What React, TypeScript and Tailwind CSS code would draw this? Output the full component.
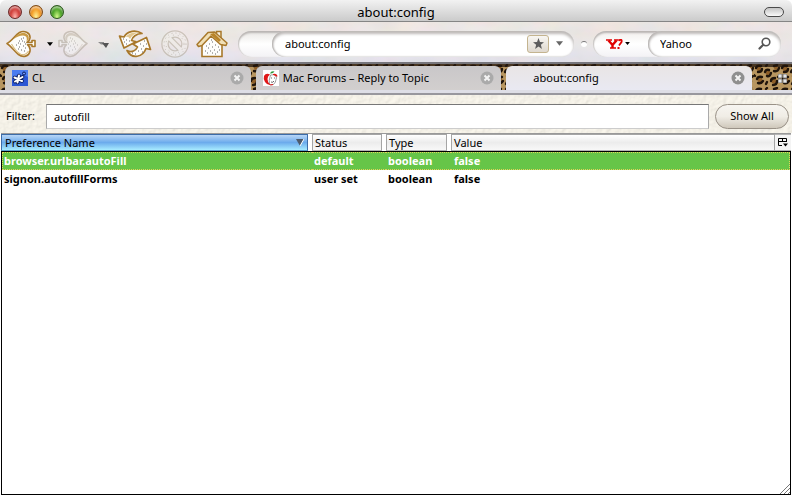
import { useState } from 'react';
import type { ReactNode } from 'react';

interface Preference {
    name: string;
    status: string;
    type: string;
    value: string;
}

const preferences: Preference[] = [
    { name: 'browser.urlbar.autoFill', status: 'default', type: 'boolean', value: 'false' },
    { name: 'signon.autofillForms', status: 'user set', type: 'boolean', value: 'false' },
];

const GOLD = '#a8782a';

/* ---------- Textures ---------- */

function LeopardTexture() {
    return (
        <svg className="absolute inset-0 h-full w-full" aria-hidden="true">
            <defs>
                <pattern id="leopard" width="26" height="23" patternUnits="userSpaceOnUse">
                    <rect width="26" height="23" fill="#b89660" />
                    <g fill="#8f5f28">
                        <circle cx="5" cy="5" r="2.4" />
                        <circle cx="14" cy="9" r="2.4" />
                        <circle cx="22" cy="4" r="2" />
                        <circle cx="6" cy="16" r="2.4" />
                        <circle cx="20" cy="17" r="2.6" />
                    </g>
                    <g fill="none" stroke="#1f140b" strokeWidth="2.4" strokeLinecap="round">
                        <path d="M2 4 Q3 1 7 2 M8 5 Q8 8 4 8" />
                        <path d="M11 8 Q12 5 15 6 M17 9 Q16 13 13 12" />
                        <path d="M20 2 L23 1 M25 4 Q24 8 20 7" />
                        <path d="M3 15 Q4 12 8 13 M9 17 Q7 20 4 19" />
                        <path d="M17 17 Q17 14 21 14 M23 17 Q23 21 19 21" />
                        <path d="M0 11 L1 12 M13 18 L12 20 M13 1 L12 2 M25 12 L24 13" />
                    </g>
                </pattern>
            </defs>
            <rect width="100%" height="100%" fill="url(#leopard)" />
            <rect width="100%" height="3" fill="#23150d" opacity="0.75" />
        </svg>
    );
}

function PaperTexture() {
    return (
        <svg className="absolute inset-0 h-full w-full opacity-60" aria-hidden="true">
            <filter id="paper" x="0" y="0" width="100%" height="100%">
                <feTurbulence type="fractalNoise" baseFrequency="0.2" numOctaves="3" seed="4" />
                <feDiffuseLighting lightingColor="#f8f4ea" surfaceScale="0.7" diffuseConstant="1.12">
                    <feDistantLight azimuth="230" elevation="60" />
                </feDiffuseLighting>
            </filter>
            <rect width="100%" height="100%" filter="url(#paper)" />
        </svg>
    );
}

function StoneTexture() {
    return (
        <svg className="absolute inset-0 h-full w-full opacity-30" aria-hidden="true">
            <filter id="stone" x="0" y="0" width="100%" height="100%">
                <feTurbulence type="fractalNoise" baseFrequency="0.03 0.05" numOctaves="4" seed="9" />
                <feColorMatrix values="0.5 0 0 0 0.6  0 0.3 0 0 0.67  0 0 0.5 0 0.58  0 0 0 0 1" />
            </filter>
            <rect width="100%" height="100%" filter="url(#stone)" />
        </svg>
    );
}

/* ---------- Toolbar icons ---------- */

function SpadeIcon() {
    return (
        <svg viewBox="0 0 30 28" className="h-7 w-[30px]" aria-hidden="true">
            <path
                d="M1 13.500 C6 11 9 5 13.500 2.500 C18 0 24.500 2.500 24 8 C23.800 10.200 22.500 11.600 21 12.500 H26 V10.500 H29 V16.500 H26 V14.700 H21.500 C23 16 24.500 18 24 21 C23 26.500 17 28 12.500 24.500 C8 21 5 16 1 13.500Z"
                fill="#fdfdfb"
                stroke={GOLD}
                strokeWidth="1.600"
                strokeLinejoin="round"
            />
            <path d="M8 9 Q12 2.500 18 2.700 Q23.500 4 22.800 9.500 L20.500 11.500 Q22 5.500 17 5.500 Q12 5.500 8 9Z" fill="#c99b45" />
            <path d="M5.500 14 Q10 22 15 24.500 Q20 25.500 22.500 21" fill="none" stroke="#dcc084" strokeWidth="1.200" />
            <path
                d="M15 9h1M17 8h1M13 11h1M16 11h1M12 13h1M18 12h1M10 15h1M14 14h1M13 17h1M17 16h1M19 18h1M15 20h1M18 21h1M19 14h1M12 19h1"
                stroke="#666"
                strokeWidth="1"
            />
        </svg>
    );
}

function ReloadIcon() {
    return (
        <svg viewBox="0 0 34 30" className="h-[30px] w-[34px]" aria-hidden="true">
            <g fill="#fdfdfb" stroke={GOLD} strokeWidth="1.700" strokeLinejoin="round">
                <path d="M24 4.500 C18 .5 9.500 1.500 6 8 L1.500 7 L6 19 L18 12.800 L13.500 11.500 C14 8 18.500 4.500 24 4.500Z" />
                <path d="M9 21.500 C14 24 18 21.500 19.500 18 L15 15 L28.500 8.500 L32.500 20.500 L28 19.500 C25 28 14 31 9 21.500Z" />
            </g>
            <path d="M7.500 8 Q12 2.500 20 3.700 Q14 5.500 12 10 Q10.500 7 7.500 8Z" fill="#d8b46c" opacity=".75" />
            <path d="M5 10h1M8 11h1M6 13h1M11 12h1M8 15h1M26 12h1M22 15h1M28 15h1M25 17h1M23 20h1M20 22h1M24 23h1M17 25h1M14 24h1" stroke="#666" />
        </svg>
    );
}

function StopIcon() {
    return (
        <svg viewBox="0 0 30 30" className="h-[30px] w-[30px] opacity-50" aria-hidden="true">
            <circle cx="15" cy="15" r="10" fill="none" stroke="#aaa08e" strokeWidth="7.500" />
            <circle cx="15" cy="15" r="10" fill="none" stroke="#f1eee9" strokeWidth="5" />
            <path d="M10.500 10.500 L19.500 19.500" stroke="#aaa08e" strokeWidth="6" />
            <path d="M9 9 L21 21" stroke="#f1eee9" strokeWidth="3.500" />
            <circle cx="15" cy="15" r="11" fill="none" stroke="#a59d8d" strokeWidth="1" strokeDasharray="1 3" />
            <circle cx="15" cy="15" r="9" fill="none" stroke="#a59d8d" strokeWidth="1" strokeDasharray="1 4" />
        </svg>
    );
}

function HomeIcon() {
    return (
        <svg viewBox="0 0 32 28" className="h-7 w-8" aria-hidden="true">
            <path d="M20.500 6 V1.500 H25 V10Z" fill="#f7f0df" stroke={GOLD} strokeWidth="1.500" />
            <path d="M6 13 L16 4 L26 13 V26.500 H6Z" fill="#fdfdfb" stroke={GOLD} strokeWidth="1.600" />
            <path
                d="M1 14.500 L12 2.500 L18.500 2 L31 13 L30 15.500 L24.500 14.500 L15 6 L6 15.500 L2.500 16.500Z"
                fill="#f0dfb6"
                stroke={GOLD}
                strokeWidth="1.500"
                strokeLinejoin="round"
            />
            <path d="M14 4 L18 3 L25 10 L23 12Z" fill="#b98428" />
            <path d="M10 16h1M13 14h1M16 12h1M19 15h1M22 17h1M12 18h1M16 17h1M9 21h1M14 21h1M18 20h1M21 22h1M11 23h1M16 23h1M19 24h1M23 20h1M15 10h1" stroke="#666" />
        </svg>
    );
}

function DownArrow({ className }: { className: string }) {
    return (
        <svg viewBox="0 0 8 5" className={className} aria-hidden="true">
            <path d="M0 0H8L4 5Z" fill="currentColor" />
        </svg>
    );
}

/* ---------- Favicons and small icons ---------- */

function PawIcon() {
    return (
        <svg viewBox="0 0 16 16" className="size-4 shrink-0" aria-hidden="true">
            <rect width="16" height="16" fill="#2b56d4" />
            <path d="M0 0H16V7Q8 2 0 8Z" fill="#4a7cf0" />
            <path d="M7 5.500L5.500 12.500M2.500 7.500L10 11M10.500 7L3 11.500" stroke="#0a1c5c" strokeWidth="3.600" strokeLinecap="round" />
            <path d="M7 5.500L5.500 12.500M2.500 7.500L10 11M10.500 7L3 11.500" stroke="#fff" strokeWidth="2" strokeLinecap="round" />
            <circle cx="12" cy="3.500" r="1.500" fill="#6f93f5" stroke="#0a1c5c" />
        </svg>
    );
}

function AppleFaceIcon() {
    return (
        <svg viewBox="0 0 16 16" className="size-4 shrink-0" aria-hidden="true">
            <rect width="16" height="16" fill="#fff" />
            <path d="M7 4.500 Q3 2.500 1 6 Q0 9 2 12 Q4 15 7 15 Q4.500 12 4.500 9 Q4.500 6 7 4.500Z" fill="#e01818" />
            <path d="M7.500 5 Q11 4 13 6 Q14 8 13 9.500 Q13 12 10.500 14.500 Q8 15.500 6.500 14 Q5.500 11 7.500 5Z" fill="#fff" stroke="#777" strokeWidth=".7" />
            <path d="M10 4 Q14 3 14.500 6.500 L13 6.500 Q12 4.800 10 5Z" fill="#e01818" />
            <path d="M7 3.500 Q8 .5 11.500 1.500 Q10 4 7 3.500Z" fill="#2f9a3c" />
            <path d="M8 8h1M11 8h1M8 12q2 1 3-1" stroke="#444" strokeWidth=".8" fill="none" />
            <path d="M5 13 Q7 16 10 14.500" stroke="#e01818" fill="none" />
        </svg>
    );
}

function CloseIcon() {
    return (
        <svg viewBox="0 0 14 14" className="size-[14px]" aria-hidden="true">
            <circle cx="7" cy="7" r="6.500" fill="currentColor" />
            <path d="M4.500 4.500L9.500 9.500M9.500 4.500L4.500 9.500" stroke="#f4f4f4" strokeWidth="2" />
        </svg>
    );
}

function YahooIcon() {
    return (
        <svg viewBox="0 0 17 10" className="h-[10px] w-[17px]" aria-hidden="true">
            <path d="M0 1H6M8 1H12.500M4 9H10" stroke="#e00000" strokeWidth="1.600" fill="none" />
            <path d="M2.500 1.500L6.500 6M10.500 1.500L6.500 6V9" stroke="#e00000" strokeWidth="2.400" fill="none" />
            <path d="M12.500 1.500Q16.500 -.5 15.500 3L13 6.500" stroke="#e00000" strokeWidth="1.800" fill="none" />
            <rect x="11.500" y="8" width="2" height="2" fill="#e00000" />
        </svg>
    );
}

function MagnifierIcon() {
    return (
        <svg viewBox="0 0 13 13" className="h-[13px] w-[13px]" aria-hidden="true">
            <circle cx="8" cy="5" r="3.800" fill="none" stroke="#555" strokeWidth="1.600" />
            <path d="M5.300 7.700L1.500 11.500" stroke="#555" strokeWidth="2.200" strokeLinecap="round" />
        </svg>
    );
}

/* ---------- Window parts ---------- */

function TitleBar() {
    return (
        <header className="relative flex h-[22px] items-center justify-between rounded-t-md border-b border-[#858585] bg-linear-to-b from-[#f2f2f2] to-[#cbcbcb] px-2 pt-[2px]">
            <div className="flex gap-[7px]">
                <button aria-label="Close window" className="size-[14px] rounded-full border border-[#6b2a28] bg-radial-[at_50%_90%] from-[#ffb6ae] via-[#d2413c] to-[#962422] shadow-[inset_0_2px_2px_#ffffff88]" />
                <button aria-label="Minimize window" className="size-[14px] rounded-full border border-[#7c4a17] bg-radial-[at_50%_90%] from-[#fff39a] via-[#f5a02a] to-[#b85c0e] shadow-[inset_0_2px_2px_#ffffff88]" />
                <button aria-label="Zoom window" className="size-[14px] rounded-full border border-[#2c571c] bg-radial-[at_50%_90%] from-[#d4fb8c] via-[#52a82a] to-[#256e15] shadow-[inset_0_2px_2px_#ffffff88]" />
            </div>
            <h1 className="pointer-events-none absolute inset-x-0 text-center text-[13px] leading-5">about:config</h1>
            <button aria-label="Toggle toolbar" className="h-[10px] w-5 rounded-full border border-[#4a4a4a] bg-linear-to-b from-[#c4c4c4] to-[#fafafa]" />
        </header>
    );
}

function Toolbar() {
    return (
        <nav className="relative h-[42px] border-b-2 border-[#77767c] bg-linear-to-b from-[#eee5df] via-[#ebe6e3] to-[#dddde8] pl-[6px] pr-[11px] pt-[3px]">
            <StoneTexture />
            <div className="relative flex h-full items-center">
                <button aria-label="Back"><SpadeIcon /></button>
                <button aria-label="Back history" className="flex w-[22px] justify-center pl-[6px]">
                    <DownArrow className="h-1 w-[6px]" />
                </button>
                <button aria-label="Forward" className="-scale-x-100 opacity-35 grayscale-75"><SpadeIcon /></button>
                <button aria-label="Forward history" className="flex w-[30px] justify-center pt-[2px]">
                    <svg viewBox="0 0 11 6" className="h-[6px] w-[11px]" aria-hidden="true">
                        <path d="M0 0H6V2.500H3Z" fill="#8b8b8b" />
                        <path d="M4 1H11L8 6Z" fill="#555" />
                    </svg>
                </button>
                <button aria-label="Reload" className="mr-2"><ReloadIcon /></button>
                <button aria-label="Stop" className="mr-[6px]"><StopIcon /></button>
                <button aria-label="Home" className="mr-[10px]"><HomeIcon /></button>

                {/* Location bar */}
                <div className="flex h-[26px] flex-1 rounded-full bg-linear-to-b from-[#e9e7e4] via-white to-[#f3f2f5] pl-[34px] shadow-[inset_0_2px_2px_#b9b5b3,inset_1px_0_1px_#d6d3d1]">
                    <div className="flex flex-1 items-center rounded-full bg-white pl-[13px] pr-[11px] shadow-[inset_0_3px_3px_#bdb9b7,inset_1px_0_2px_#a5a2a0]">
                        <input aria-label="Location" defaultValue="about:config" className="w-0 flex-1 bg-transparent text-[11px] leading-4 outline-none" />
                        <button aria-label="Bookmark this page" className="mr-[7px] flex h-[18px] w-[22px] items-center justify-center rounded-[3px] border border-[#c4b48f] bg-linear-to-b from-[#f8f6f2] to-[#dfd9cf]">
                            <svg viewBox="0 0 12 12" className="size-[11px]" aria-hidden="true">
                                <path d="M6 0L7.600 4.300L12 4.500L8.600 7.300L9.700 12L6 9.300L2.300 12L3.400 7.300L0 4.500L4.400 4.300Z" fill="#5c5c5c" />
                            </svg>
                        </button>
                        <button aria-label="Show history" className="text-[#666]">
                            <DownArrow className="h-[5px] w-[7px]" />
                        </button>
                    </div>
                </div>

                <div className="flex w-[19px] justify-center">
                    <span className="size-[6px] rounded-full border-t border-[#777] bg-white" />
                </div>

                {/* Search bar */}
                <div className="flex h-[26px] w-[188px] rounded-full bg-linear-to-b from-[#f1eeec] via-white to-[#f3f2f5] shadow-[inset_0_2px_2px_#b9b5b3,inset_1px_0_1px_#d6d3d1]">
                    <button aria-label="Search engine" className="flex w-[55px] items-center gap-[2px] pl-[13px]">
                        <YahooIcon />
                        <DownArrow className="h-[3px] w-[5px]" />
                    </button>
                    <div className="flex flex-1 items-center rounded-full bg-white pl-3 pr-[10px] shadow-[inset_0_3px_3px_#bdb9b7,inset_1px_0_2px_#a5a2a0]">
                        <input aria-label="Search" defaultValue="Yahoo" className="w-0 flex-1 bg-transparent text-[11px] leading-4 outline-none" />
                        <button aria-label="Run search"><MagnifierIcon /></button>
                    </div>
                </div>
            </div>
        </nav>
    );
}

interface TabProps {
    title: string;
    icon?: ReactNode;
    active?: boolean;
}

function Tab({ title, icon, active = false }: TabProps) {
    return (
        <div
            className={
                active
                    ? 'flex items-center rounded-t-md bg-linear-to-b from-[#e9e5e5] to-[#e9e9f2] pl-[27px] pr-[7px]'
                    : 'flex items-center rounded-t-md bg-linear-to-b from-[#c9c7c9] to-[#d2cfce] px-[7px]'
            }
        >
            <button role="tab" aria-selected={active} className="flex flex-1 items-center gap-1 text-left text-[11px] leading-4">
                {icon}
                {title}
            </button>
            <button aria-label={`Close ${title}`} className={active ? 'text-[#8f8f8f]' : 'text-[#aaa]'}>
                <CloseIcon />
            </button>
        </div>
    );
}

function TabStrip() {
    return (
        <div>
            <div className="relative h-[26px]">
                <LeopardTexture />
                <div className="relative flex h-full pl-[5px] pt-[2px]">
                    <div role="tablist" className="grid flex-1 grid-cols-3 gap-[5px]">
                        <Tab title="CL" icon={<PawIcon />} />
                        <Tab title="Mac Forums – Reply to Topic" icon={<AppleFaceIcon />} />
                        <Tab title="about:config" active />
                    </div>
                    <button aria-label="List all tabs" className="flex w-10 items-center justify-end pr-[5px]">
                        <svg viewBox="0 0 9 9" className="size-[9px]" aria-hidden="true">
                            <path d="M0 0h4v4H0zM5 0h4v4H5zM0 5h4v4H0zM5 5h4v4H5z" fill="#e4e4e4" stroke="#666" strokeWidth=".8" />
                        </svg>
                    </button>
                </div>
            </div>
            <div className="h-[5px] border-b-2 border-[#98979d] bg-[#dedee6]" />
        </div>
    );
}

interface ColumnHeaderProps {
    label: string;
    last?: boolean;
}

function ColumnHeader({ label, last = false }: ColumnHeaderProps) {
    return (
        <th className={last ? 'p-0 font-normal' : 'p-0 pr-1 font-normal'}>
            <div className="h-[17px] border border-[#a5a5a5] border-b-[#b5b5b5] bg-linear-to-b from-white via-[#ececec] to-[#f8f8f8] px-[2px] text-left leading-4">
                {label}
            </div>
        </th>
    );
}

function PreferenceTable({ rows }: { rows: Preference[] }) {
    const [selected, setSelected] = useState('browser.urlbar.autoFill');

    return (
        <main className="flex flex-1 flex-col bg-white px-px pb-px">
            <table className="w-full table-fixed border-separate border-spacing-0 border-t border-[#999] text-[11px]">
                <colgroup>
                    <col className="w-[311px]" />
                    <col className="w-[74px]" />
                    <col className="w-[65px]" />
                    <col />
                    <col className="w-4" />
                </colgroup>
                <thead>
                    <tr>
                        <th className="p-0 pr-1 font-normal">
                            <div className="flex h-[17px] items-center justify-between border border-[#3c6ca8] border-b-[#5aa0d0] bg-linear-to-b from-[#b8d6f6] via-[#6cabec] to-[#a8ecff] pl-[3px] pr-[3px] leading-4">
                                Preference Name
                                <svg viewBox="0 0 8 7" className="h-[7px] w-2" aria-hidden="true">
                                    <path d="M0 0H8L4 7Z" fill="#4d5b6c" />
                                    <path d="M8 0L4 7" stroke="#fff" />
                                </svg>
                            </div>
                        </th>
                        <ColumnHeader label="Status" />
                        <ColumnHeader label="Type" />
                        <ColumnHeader label="Value" last />
                        <th className="p-0">
                            <button aria-label="Choose columns" className="flex h-[17px] w-full items-center justify-center border-y border-[#b5b5b5] bg-[#f4f4f4]">
                                <svg viewBox="0 0 10 9" className="h-[9px] w-[10px]" aria-hidden="true">
                                    <path d="M4 7.500H.5V.5H8.500V4M.5 3.500H8.500M4.500 .5V3.500" fill="none" stroke="#000" />
                                    <path d="M5 5.500H10L7.500 8.500Z" fill="#000" />
                                </svg>
                            </button>
                        </th>
                    </tr>
                </thead>
                <tbody className="font-bold">
                    {rows.map((row, index) => {
                        const isSelected = row.name === selected;
                        const top = index === 0 ? ' border-t' : '';
                        return (
                            <tr
                                key={row.name}
                                onClick={() => setSelected(row.name)}
                                className={isSelected ? 'h-[18px] bg-[#66c548] text-white' : 'h-[18px]'}
                            >
                                <td className={'border-l border-black p-0 leading-[18px]' + top}>
                                    <div className={isSelected ? 'h-[18px] border-y border-l border-dotted border-[#e2d25a] pl-px leading-4' : 'pl-[2px]'}>
                                        {row.name}
                                    </div>
                                </td>
                                <td className={'border-black p-0 leading-[18px]' + top}>
                                    <div className={isSelected ? 'h-[18px] border-y border-dotted border-[#e2d25a] pl-[2px] leading-4' : 'pl-[2px]'}>
                                        {row.status}
                                    </div>
                                </td>
                                <td className={'border-black p-0 leading-[18px]' + top}>
                                    <div className={isSelected ? 'h-[18px] border-y border-dotted border-[#e2d25a] pl-[2px] leading-4' : 'pl-[2px]'}>
                                        {row.type}
                                    </div>
                                </td>
                                <td colSpan={2} className={'border-r border-black p-0 leading-[18px]' + top}>
                                    <div className={isSelected ? 'h-[18px] border-y border-r border-dotted border-[#e2d25a] pl-[3px] leading-4' : 'pl-[3px]'}>
                                        {row.value}
                                    </div>
                                </td>
                            </tr>
                        );
                    })}
                </tbody>
            </table>
            <div className="flex flex-1 items-end justify-end border-x border-b border-black">
                <svg viewBox="0 0 10 10" className="size-[10px]" aria-hidden="true">
                    <path d="M0 10L10 0M4 10L10 4M8 10L10 8" stroke="#777" strokeWidth="1" />
                </svg>
            </div>
        </main>
    );
}

export default function App() {
    const [filter, setFilter] = useState('autofill');
    const rows = preferences.filter((row) => row.name.toLowerCase().includes(filter.toLowerCase()));

    return (
        <div className="flex min-h-screen flex-col bg-white font-['Noto_Sans',sans-serif] text-black">
            <TitleBar />
            <Toolbar />
            <TabStrip />
            <div className="relative h-[38px] bg-[#f4f1e8]">
                <PaperTexture />
                <div className="relative flex h-full items-center pl-[6px] pr-[3px] pt-[4px] text-[11px]">
                    <label htmlFor="filter" className="w-10">Filter:</label>
                    <input
                        id="filter"
                        value={filter}
                        onChange={(e) => setFilter(e.target.value)}
                        className="h-[25px] min-w-0 flex-1 border border-t-[#777] border-x-[#aaa] border-b-[#ccc] bg-white px-[7px] leading-4 outline-none"
                    />
                    <button
                        onClick={() => setFilter('')}
                        className="ml-[6px] h-[25px] w-[74px] rounded-full border border-[#999187] bg-linear-to-b from-[#f7f5f1] via-[#f0ede6] to-[#cfc8bb]"
                    >
                        Show All
                    </button>
                </div>
            </div>
            <PreferenceTable rows={rows} />
        </div>
    );
}
